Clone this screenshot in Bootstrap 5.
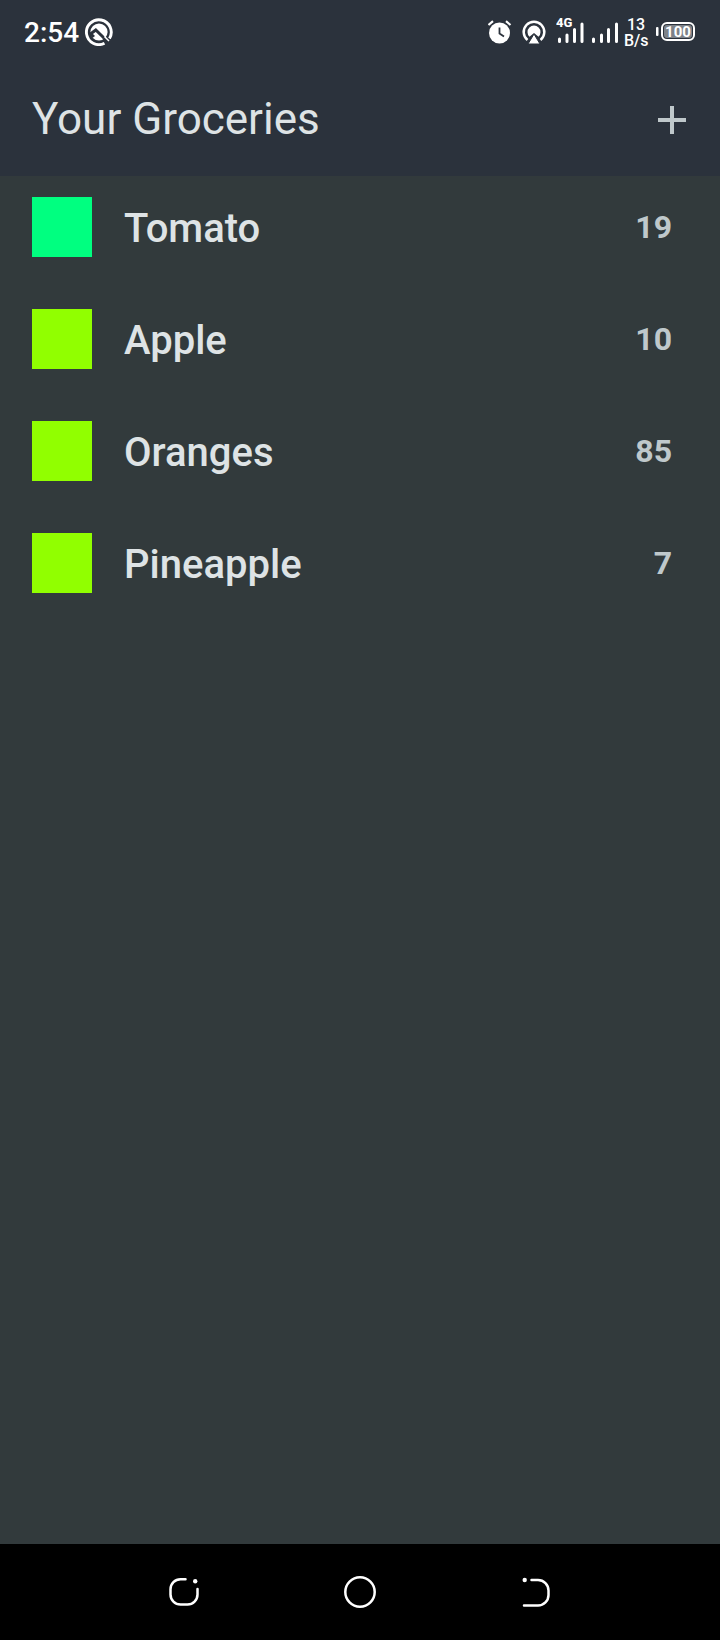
<!DOCTYPE html>
<html lang="en">
<head>
<meta charset="utf-8">
<meta name="viewport" content="width=device-width, initial-scale=1">
<title>Your Groceries</title>
<link href="https://cdn.jsdelivr.net/npm/bootstrap@5.3.0/dist/css/bootstrap.min.css" rel="stylesheet">
<style>
  body { font-family: Roboto, "Liberation Sans", sans-serif; background: #323a3c; color: #dee3e5; }
  .top-area { background: #2b323c; }
  .status-bar { height: 64px; padding: 0 24px; color: #fff; }
  .clock { font-size: 28px; line-height: 32px; font-weight: 500; padding-top: 2px; }
  .clock-group { gap: 6px; }
  .status-icons { gap: 10px; }
  .net-speed { font-size: 16px; line-height: 16px; width: 28px; font-weight: 500; padding: 2px 0 0 4px; }
  .app-bar { height: 112px; padding: 0 24px 0 32px; }
  .app-title { font-size: 44px; line-height: 52px; font-weight: 400; padding-bottom: 2px; }
  .add-btn { color: #bfc8cb; width: 48px; height: 48px; }
  .grocery-list { padding: 21px 48px 20px 32px; gap: 52px; }
  .swatch { width: 60px; height: 60px; }
  .swatch-vegetable { background: #00ff80; }
  .swatch-fruit { background: #91ff00; }
  .item-name { font-size: 40px; line-height: 48px; font-weight: 500; padding-top: 4px; }
  .item-count { font-size: 32px; line-height: 40px; font-weight: 700; color: #bfc8cb; }
  .system-nav { height: 96px; padding: 0 96px; background: #000; }
  .system-nav .btn { color: #fff; }
  svg { display: block; flex: none; }
</style>
</head>
<body class="d-flex flex-column min-vh-100">
<header class="top-area">
  <div class="status-bar d-flex align-items-center justify-content-between">
    <div class="clock-group d-flex align-items-center">
      <span class="clock">2:54</span>
      <svg width="28" height="28" viewBox="0 0 28 28" aria-hidden="true">
        <path d="M19.5 25.2A12.4 12.4 0 1 1 24.5 20.5" fill="none" stroke="#fff" stroke-width="2.9"/>
        <circle cx="14" cy="14" r="8.6" fill="#fff"/>
        <path d="M4 17L10.800 12L19 20" fill="none" stroke="#2b323c" stroke-width="3"/>
        <path d="M5 17L7.500 15.500L10 18L7.500 20Z" fill="#2b323c"/>
        <path d="M18.500 20L21.500 23" stroke="#2b323c" stroke-width="3"/>
        <path d="M19.500 18.500L24 23" stroke="#fff" stroke-width="1.500"/>
      </svg>
    </div>
    <div class="d-flex align-items-center">
      <div class="status-icons d-flex align-items-center">
        <svg width="24" height="24" viewBox="0 0 24 24" aria-hidden="true">
          <circle cx="11.500" cy="13" r="10.500" fill="#fff"/>
          <path d="M.5 5L5 1.200M22.500 5L18 1.200" stroke="#fff" stroke-width="2.200"/>
          <path d="M11.500 7.500V13.500L16 16.500" fill="none" stroke="#2b323c" stroke-width="1.800"/>
        </svg>
        <svg width="24" height="24" viewBox="0 0 24 24" aria-hidden="true">
          <path d="M5.500 20A10.300 10.300 0 1 1 18.500 20" fill="none" stroke="#fff" stroke-width="2.500"/>
          <path d="M7.500 16.800A6.500 6.500 0 1 1 16.500 16.800L12 13Z" fill="#fff"/>
          <path d="M12 14L18 24H6Z" fill="#fff" stroke="#2b323c" stroke-width="1"/>
        </svg>
        <div class="d-flex align-items-center">
          <svg width="64" height="38" viewBox="0 -4 64 38" aria-label="Signal strength">
            <text x="0" y="10" font-size="13" font-weight="800" fill="#fff">4G</text>
            <path d="M3.500 22V24.500M11 18V24.500M18.500 12.500V24.500M26 7V24.500M37.500 22V24.500M45.500 18V24.500M52.500 12.500V24.500M60.500 7V24.500" stroke="#fff" stroke-width="3" stroke-linecap="round"/>
          </svg>
          <div class="net-speed text-center">13<br>B/s</div>
        </div>
      </div>
      <svg class="ms-2" width="40" height="20" viewBox="0 0 40 20" aria-label="Battery 100 percent">
        <rect x="0" y="5" width="2.500" height="9" rx="1" fill="#fff"/>
        <rect x="6" y="1" width="32" height="17" rx="5" fill="none" stroke="#fff" stroke-width="2"/>
        <rect x="8" y="3" width="28" height="13" rx="3" fill="#7d8288"/>
        <text x="22" y="15" text-anchor="middle" font-size="15" font-weight="700" fill="#fff">100</text>
      </svg>
    </div>
  </div>
  <div class="app-bar d-flex align-items-center justify-content-between">
    <h1 class="app-title m-0">Your Groceries</h1>
    <button type="button" class="add-btn btn border-0 p-0 d-flex align-items-center justify-content-center" aria-label="Add item">
      <svg width="28" height="28" viewBox="0 0 28 28"><path d="M14 0V28M0 14H28" stroke="currentColor" stroke-width="4"/></svg>
    </button>
  </div>
</header>
<main class="flex-grow-1">
  <ul class="grocery-list list-unstyled d-flex flex-column m-0">
    <li class="d-flex align-items-center"><span class="swatch swatch-vegetable"></span><span class="item-name ms-3 ps-3">Tomato</span><span class="item-count ms-auto">19</span></li>
    <li class="d-flex align-items-center"><span class="swatch swatch-fruit"></span><span class="item-name ms-3 ps-3">Apple</span><span class="item-count ms-auto">10</span></li>
    <li class="d-flex align-items-center"><span class="swatch swatch-fruit"></span><span class="item-name ms-3 ps-3">Oranges</span><span class="item-count ms-auto">85</span></li>
    <li class="d-flex align-items-center"><span class="swatch swatch-fruit"></span><span class="item-name ms-3 ps-3">Pineapple</span><span class="item-count ms-auto">7</span></li>
  </ul>
</main>
<nav class="system-nav d-flex align-items-center" aria-label="System navigation">
  <button type="button" class="btn border-0 p-0 col d-flex justify-content-center" aria-label="Recent apps">
    <svg width="32" height="32" viewBox="0 0 32 32"><path d="M17.500 3.300H12.500A10 10 0 0 0 2.500 13.300V18.500A10 10 0 0 0 12.500 28.500H19.500A10 10 0 0 0 29.500 18.500V13" fill="none" stroke="currentColor" stroke-width="2.500" stroke-linecap="round"/><circle cx="27.200" cy="5.300" r="2.200" fill="currentColor"/></svg>
  </button>
  <button type="button" class="btn border-0 p-0 col d-flex justify-content-center" aria-label="Home">
    <svg width="32" height="32" viewBox="0 0 32 32"><circle cx="16" cy="16" r="14.700" fill="none" stroke="currentColor" stroke-width="2.500"/></svg>
  </button>
  <button type="button" class="btn border-0 p-0 col d-flex justify-content-center" aria-label="Back">
    <svg width="32" height="32" viewBox="0 0 32 32"><path d="M11.500 4H18A10.500 10.500 0 0 1 28.500 14.500V19A10.500 10.500 0 0 1 18 29.500H4" fill="none" stroke="currentColor" stroke-width="2.500" stroke-linecap="round"/><circle cx="4.700" cy="4" r="2.200" fill="currentColor"/></svg>
  </button>
</nav>
<script src="https://cdn.jsdelivr.net/npm/bootstrap@5.3.0/dist/js/bootstrap.bundle.min.js"></script>
</body>
</html>
